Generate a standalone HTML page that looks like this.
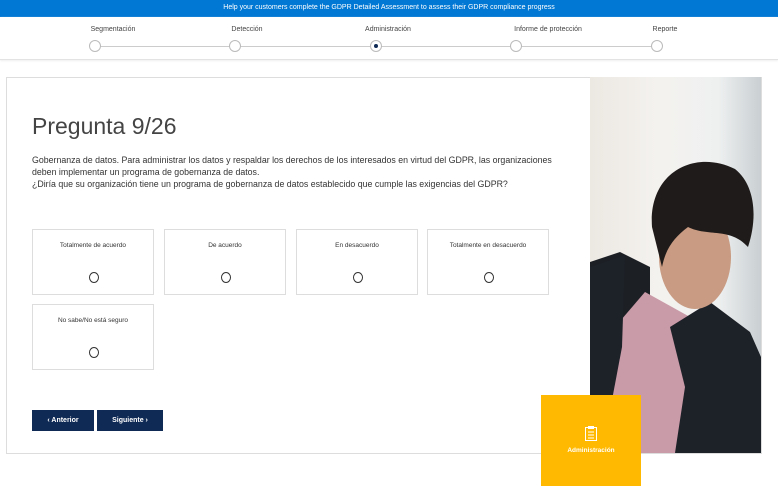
<!DOCTYPE html>
<html><head><meta charset="utf-8"><style>
*{margin:0;padding:0;box-sizing:border-box}
body{width:778px;height:492px;background:#fff;font-family:"Liberation Sans",sans-serif;position:relative;overflow:hidden;color:#222}
.top{position:absolute;left:0;top:0;width:778px;height:17px;background:#0078d4;color:#fff;font-size:7px;text-align:center;line-height:16px}
.steps{position:absolute;left:0;top:17px;width:778px;height:43px;border-bottom:1px solid #e3e3e3;box-shadow:0 1px 2px #eee}
.line{position:absolute;top:29px;left:95px;width:562px;height:1px;background:#ccc}
.st{position:absolute;top:9px;font-size:7px;color:#444;transform:translateX(-50%);white-space:nowrap}
.c{position:absolute;top:23px;width:12px;height:12px;border-radius:50%;border:1px solid #bbb;background:#fff;transform:translateX(-50%)}
.c.on::after{content:"";position:absolute;left:3px;top:3px;width:4px;height:4px;border-radius:50%;background:#0f2a55}
.card{position:absolute;left:6px;top:77px;width:756px;height:377px;border:1px solid #ddd}
h1{position:absolute;left:32px;top:113px;font-size:23px;font-weight:normal;color:#444}
.q{position:absolute;left:32px;top:154px;width:560px;font-size:8.8px;line-height:12px;color:#333;white-space:nowrap}
.o{position:absolute;width:122px;height:66px;border:1px solid #ddd;font-size:6.5px;text-align:center;color:#333}
.o span{display:block;margin-top:12px}
.o i{position:absolute;left:56px;top:42px;width:10px;height:11px;border:1px solid #333;border-radius:50%}
.b{position:absolute;top:410px;height:21px;background:#0f2a55;color:#fff;font-size:7px;font-weight:bold;line-height:21px;text-align:center}
.photo{position:absolute;left:590px;top:77px;width:171px;height:376px;overflow:hidden;background:linear-gradient(90deg,#ece8e2 0,#f4f2ef 40%,#eef0f0 75%,#c9cfd2 100%)}
.y{position:absolute;left:541px;top:395px;width:100px;height:91px;background:#ffb900;color:#fff;font-size:6.5px;font-weight:bold;text-align:center}
</style></head><body>
<div class="top">Help your customers complete the GDPR Detailed Assessment to assess their GDPR compliance progress</div>
<div class="steps"><div class="line"></div>
<div class="st" style="left:113px">Segmentación</div><div class="st" style="left:247px">Detección</div><div class="st" style="left:388px">Administración</div><div class="st" style="left:548px">Informe de protección</div><div class="st" style="left:665px">Reporte</div>
<div class="c" style="left:95px"></div><div class="c" style="left:235px"></div><div class="c on" style="left:376px"></div><div class="c" style="left:516px"></div><div class="c" style="left:657px"></div>
</div>
<div class="card"></div>
<h1>Pregunta 9/26</h1>
<div class="q">Gobernanza de datos. Para administrar los datos y respaldar los derechos de los interesados en virtud del GDPR, las organizaciones<br>deben implementar un programa de gobernanza de datos.<br>¿Diría que su organización tiene un programa de gobernanza de datos establecido que cumple las exigencias del GDPR?</div>
<div class="o" style="left:32px;top:229px"><span>Totalmente de acuerdo</span><i></i></div>
<div class="o" style="left:164px;top:229px"><span>De acuerdo</span><i></i></div>
<div class="o" style="left:296px;top:229px"><span>En desacuerdo</span><i></i></div>
<div class="o" style="left:427px;top:229px"><span>Totalmente en desacuerdo</span><i></i></div>
<div class="o" style="left:32px;top:304px"><span>No sabe/No está seguro</span><i></i></div>
<div class="b" style="left:32px;width:62px">&lsaquo; Anterior</div>
<div class="b" style="left:97px;width:66px">Siguiente &rsaquo;</div>
<div class="photo"><svg width="171" height="376" viewBox="0 0 171 376">
<path d="M0 376 L0 185 L30 175 L60 190 L60 376Z" fill="#1c1f24"/>
<path d="M25 250 L55 215 L100 240 L112 280 L118 376 L15 376 Z" fill="#c99aa8"/>
<path d="M80 250 L120 225 L160 255 L171 280 L171 376 L85 376 L95 310Z" fill="#1d2128"/>
<path d="M0 190 L35 178 L32 270 L12 376 L0 376Z" fill="#1d2128"/>
<ellipse cx="105" cy="180" rx="36" ry="52" fill="#c89b82"/>
<path d="M62 150 C58 95 105 72 145 92 C165 108 168 140 158 170 C140 150 118 160 98 150 C85 160 76 170 72 190 Z" fill="#1f1b1a"/>
</svg></div>
<div class="y"><svg width="14" height="16" viewBox="0 0 14 16" style="margin-top:30px"><rect x="1.5" y="2.5" width="11" height="13" fill="none" stroke="#fff"/><rect x="4" y="1" width="6" height="3" fill="#fff"/><path d="M4 7h6M4 10h6M4 13h6" stroke="#fff"/></svg><div style="margin-top:4px">Administración</div></div>
</body></html>
